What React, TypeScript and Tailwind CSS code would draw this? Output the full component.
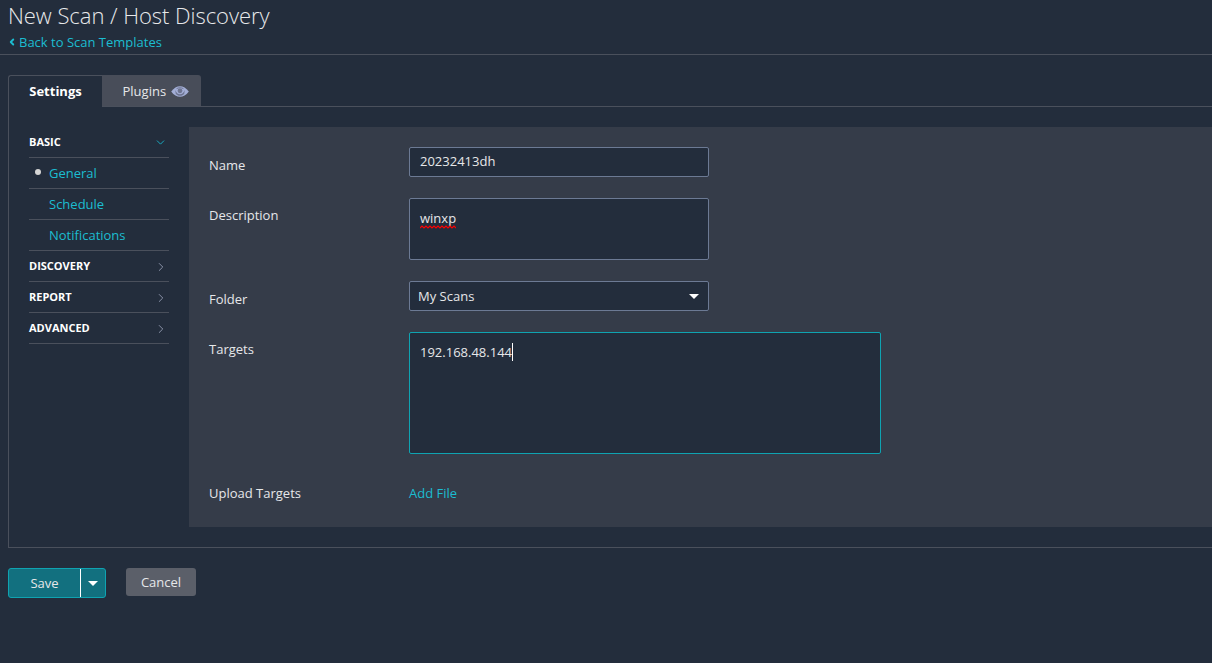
import { ChevronDown, ChevronRight, ChevronLeft } from 'lucide-react';

const font = { fontFamily: '"Open Sans", sans-serif' };

function Section({ label, open }: { label: string; open?: boolean }) {
  return (
    <div className="flex h-[31px] items-center justify-between border-b border-[#4a505c]">
      <span className="text-[11px] font-bold text-white">{label}</span>
      {open ? (
        <ChevronDown size={13} strokeWidth={1.7} className="mt-[1px] mr-[2px] text-[#17b3c8]" />
      ) : (
        <ChevronRight size={14} strokeWidth={1.6} className="mt-[2px] mr-[1px] text-[#8f98ae]" />
      )}
    </div>
  );
}

function SubItem({ label, active }: { label: string; active?: boolean }) {
  return (
    <div className="relative flex h-[31px] items-center border-b border-[#4a505c] pt-[2px] pl-[20px] text-[13px] text-[#1cbdd1]">
      {active && <span className="absolute left-[6px] top-[11px] h-[6px] w-[6px] rounded-full bg-[#d5d5d5]" />}
      {label}
    </div>
  );
}

function Row({ label, top = 0, className, children }: { label: string; top?: number; className: string; children: React.ReactNode }) {
  return (
    <div className={`flex ${className}`}>
      <div className="w-[200px] shrink-0 text-[13px] text-[#e6e7e9]" style={{ paddingTop: top }}>{label}</div>
      {children}
    </div>
  );
}

export default function App() {
  return (
    <div className="h-[663px] w-[1212px] overflow-hidden bg-[#232d3c] text-white" style={font}>
      <div className="h-[55px] border-b border-[#4a505c] pl-[8px]">
        <h1 className="text-[22px] leading-[30px] font-light tracking-[-0.04px] text-[#e8e9eb]">New Scan / Host Discovery</h1>
        <a className="mt-[2px] flex items-center text-[13px] leading-[20px] text-[#1cbdd1]">
          <ChevronLeft size={10} strokeWidth={4.5} className="mr-[2px] -ml-[1px]" />
          <span>Back to Scan Templates</span>
        </a>
      </div>

      <div className="mt-[20px] ml-[8px]">
        <div className="flex h-[31px] items-stretch">
          <div className="z-10 -mb-[1px] flex h-[32px] w-[94px] items-center justify-center rounded-tl-[3px] border-t border-l border-[#4a505c] bg-[#232d3c] text-[13px] font-bold text-white">
            Settings
          </div>
          <div className="flex w-[99px] items-center gap-[5px] rounded-tr-[3px] bg-[#484d59] pt-[2px] pl-[20.5px] text-[13px] text-[#e6e7e9]">
            Plugins
            <svg width="18" height="11" viewBox="0 0 18 11" fill="none" className="-mt-[1px]">
              <path d="M0.2 5.5C3 1.8 5.8 0.2 9 0.2S15 1.8 17.8 5.5C15 9.2 12.2 10.8 9 10.8S3 9.2 0.2 5.5Z" fill="#a3aed6" />
              <path d="M4.2 4C5.2 6.8 7 8.2 9 8.2S12.8 6.8 13.8 4L13.2 8C11.8 9.4 10.4 9.8 9 9.8S6.2 9.4 4.8 8Z" fill="#6d7490" />
              <path d="M5.6 2.6C6.6 2 7.8 1.8 9 1.8S11.4 2 12.4 2.6" stroke="#6d7490" strokeWidth="1" />
              <circle cx="9" cy="4.8" r="2.4" fill="#6d7490" />
            </svg>
          </div>
        </div>
        <div className="flex h-[442px] border-t border-b border-l border-[#4a505c] pt-[20px]">
          <div className="ml-[20px] w-[140px] shrink-0">
            <Section label="BASIC" open />
            <SubItem label="General" active />
            <SubItem label="Schedule" />
            <SubItem label="Notifications" />
            <Section label="DISCOVERY" />
            <Section label="REPORT" />
            <Section label="ADVANCED" />
          </div>
          <div className="ml-[20px] h-[400px] flex-1 bg-[#353c49] pt-[20px] pl-[20px]">
            <Row label="Name" top={9} className="h-[30px]">
              <div className="flex h-[30px] w-[300px] items-center rounded-[2px] border border-[#6c7a94] bg-[#232d3c] pl-[10px] text-[13px] text-[#e6e7e9]">20232413dh</div>
            </Row>
            <Row label="Description" top={8} className="mt-[21px] h-[62px]">
              <div className="h-[62px] w-[300px] rounded-[2px] border border-[#6c7a94] bg-[#232d3c] pt-[10px] pl-[10px] text-[13px] leading-[18px] text-[#e6e7e9]">
                <span className="relative inline-block">
                  winxp
                  <svg width="36" height="4" viewBox="0 0 36 4" fill="none" className="absolute top-[16px] left-0">
                    <path d="M0 3L2 1L4 3L6 1L8 3L10 1L12 3L14 1L16 3L18 1L20 3L22 1L24 3L26 1L28 3L30 1L32 3L34 1L36 3" stroke="#ff0000" strokeWidth="1.1" />
                  </svg>
                </span>
              </div>
            </Row>
            <Row label="Folder" top={9} className="mt-[21px] h-[30px]">
              <div className="flex h-[30px] w-[300px] items-center justify-between rounded-[2px] border border-[#6c7a94] bg-[#232d3c] pr-[9px] pl-[8px] text-[13px] text-[#e6e7e9]">
                <span className="pt-[1px]">My Scans</span>
                <span className="h-0 w-0 border-x-[5px] border-t-[5px] border-x-transparent border-t-white" />
              </div>
            </Row>
            <Row label="Targets" top={8} className="mt-[21px] h-[122px]">
              <div className="h-[122px] w-[472px] rounded-[2px] border border-[#0fa3b1] bg-[#232d3c] pt-[10px] pl-[10px] text-[13px] leading-[18px] text-[#e6e7e9]">
                <span className="border-r border-white pr-0">192.168.48.144</span>
              </div>
            </Row>
            <Row label="Upload Targets" className="mt-[30px] h-[20px]">
              <a className="text-[13px] text-[#1cbdd1]">Add File</a>
            </Row>
          </div>
        </div>
      </div>

      <div className="mt-[20px] ml-[8px] flex items-start">
        <div className="flex h-[30px] w-[98px] rounded-[3px] border border-[#0fa3b1] bg-[#12707f] text-[13px] text-[#e6e7e9]">
          <div className="flex w-[71px] items-center justify-center pt-[1px]">Save</div>
          <div className="flex flex-1 items-center justify-center border-l border-white">
            <span className="h-0 w-0 border-x-[5px] border-t-[5px] border-x-transparent border-t-white" />
          </div>
        </div>
        <div className="ml-[20px] flex h-[28px] w-[70px] items-center justify-center rounded-[3px] bg-[#5b5f69] pt-[1px] text-[13px] text-[#e6e7e9]">Cancel</div>
      </div>
    </div>
  );
}
